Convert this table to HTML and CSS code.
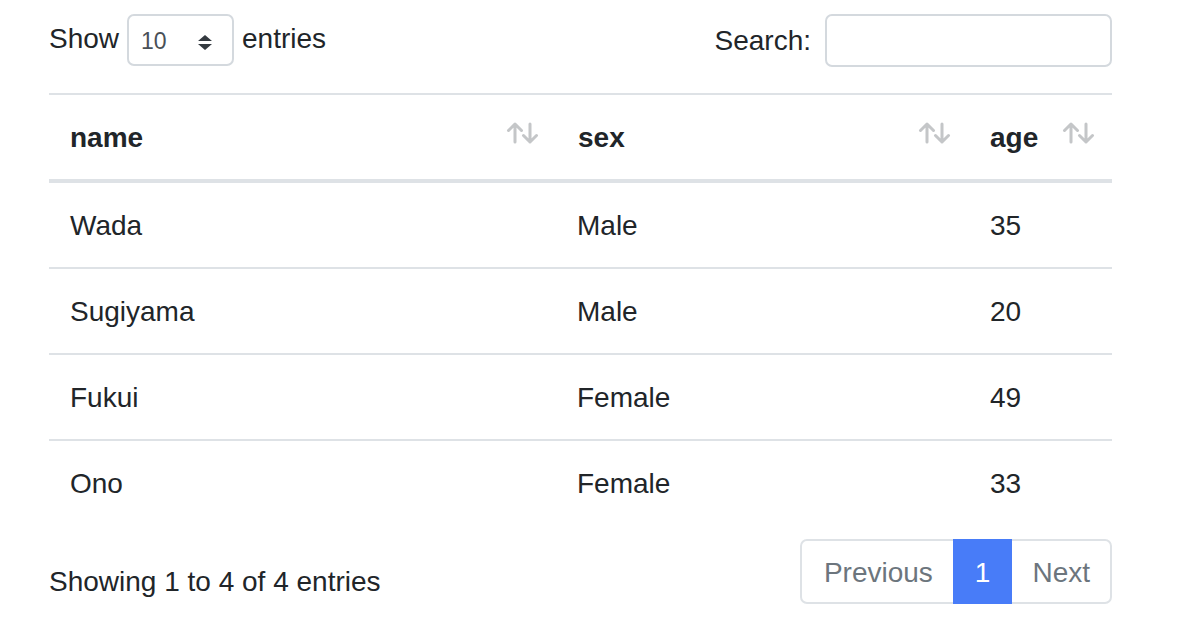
FILE: index.html
```html
<!DOCTYPE html>
<html lang="en">
<head>
<meta charset="utf-8">
<title>DataTable</title>
<link rel="stylesheet" href="styles.css">
</head>
<body>
<div class="wrap">
  <div class="top">
    <label class="len">
      <span>Show</span>
      <span class="sel-wrap">
        <select class="sel">
          <option>10</option>
          <option>25</option>
          <option>50</option>
          <option>100</option>
        </select>
        <svg class="sel-icon" width="14" height="15" viewBox="0 0 14 15"><path d="M7 0L0 6h14zM7 15L0 9h14z" fill="#343a40"/></svg>
      </span>
      <span class="len-after">entries</span>
    </label>
    <label class="search">
      <span>Search:</span>
      <input class="search-input" type="search">
    </label>
  </div>

  <table class="tbl">
    <thead>
      <tr>
        <th class="c-name"><div class="th-in"><span>name</span><svg class="sort" width="34" height="22" viewBox="0 0 34 22"><g fill="none" stroke="#c4c6c8" stroke-width="3" stroke-linecap="round" stroke-linejoin="round"><path d="M9 20V2M2.5 8.5L9 2l6.5 6.5"/><path d="M24 2v18M17.5 13.5L24 20l6.5-6.5"/></g></svg></div></th>
        <th class="c-sex"><div class="th-in"><span>sex</span><svg class="sort" width="34" height="22" viewBox="0 0 34 22"><g fill="none" stroke="#c4c6c8" stroke-width="3" stroke-linecap="round" stroke-linejoin="round"><path d="M9 20V2M2.5 8.5L9 2l6.5 6.5"/><path d="M24 2v18M17.5 13.5L24 20l6.5-6.5"/></g></svg></div></th>
        <th class="c-age"><div class="th-in"><span>age</span><svg class="sort" width="34" height="22" viewBox="0 0 34 22"><g fill="none" stroke="#c4c6c8" stroke-width="3" stroke-linecap="round" stroke-linejoin="round"><path d="M9 20V2M2.5 8.5L9 2l6.5 6.5"/><path d="M24 2v18M17.5 13.5L24 20l6.5-6.5"/></g></svg></div></th>
      </tr>
    </thead>
    <tbody>
      <tr><td>Wada</td><td>Male</td><td>35</td></tr>
      <tr><td>Sugiyama</td><td>Male</td><td>20</td></tr>
      <tr><td>Fukui</td><td>Female</td><td>49</td></tr>
      <tr><td>Ono</td><td>Female</td><td>33</td></tr>
    </tbody>
  </table>

  <div class="bottom">
    <div class="info">Showing 1 to 4 of 4 entries</div>
    <ul class="pager">
      <li class="pg pg-first"><span class="pg-link">Previous</span></li>
      <li class="pg pg-active"><span class="pg-link">1</span></li>
      <li class="pg pg-last"><span class="pg-link">Next</span></li>
    </ul>
  </div>
</div>
</body>
</html>
```

FILE: styles.css
```css
html, body {
  margin: 0;
  padding: 0;
  background: #ffffff;
}

body {
  font-family: "Liberation Sans", Arial, Helvetica, sans-serif;
  font-size: 28px;
  line-height: 42px;
  color: #212529;
}

.wrap {
  width: 1063px;
  margin-left: 49px;
  padding-top: 14px;
}

/* top controls */
.top {
  display: flex;
  justify-content: space-between;
  align-items: center;
  height: 52px;
}

.len {
  display: flex;
  align-items: center;
  white-space: nowrap;
}

.len > span:first-child {
  position: relative;
  top: -1px;
}

.sel-wrap {
  position: relative;
  display: inline-block;
  margin-left: 8px;
  height: 52px;
}

.sel {
  appearance: none;
  -webkit-appearance: none;
  width: 107px;
  height: 52px;
  box-sizing: border-box;
  border: 2px solid #d4d9de;
  border-radius: 7px;
  background: #ffffff;
  padding: 2px 0 0 12px;
  font-family: "Liberation Sans", Arial, Helvetica, sans-serif;
  font-size: 23px;
  color: #495057;
  outline: none;
}

.sel-icon {
  position: absolute;
  right: 22px;
  top: 21px;
  pointer-events: none;
}

.len-after {
  margin-left: 8px;
  position: relative;
  top: -1px;
}

.search {
  display: flex;
  align-items: center;
  white-space: nowrap;
}

.search > span {
  position: relative;
  top: 1px;
}

.search-input {
  width: 287px;
  height: 53px;
  box-sizing: border-box;
  margin-left: 14px;
  border: 2px solid #d4d9de;
  border-radius: 7px;
  background: #ffffff;
  outline: none;
  font-size: 22px;
}

/* table */
.tbl {
  width: 1063px;
  margin-top: 27px;
  border-collapse: separate;
  border-spacing: 0;
  table-layout: fixed;
}

.tbl th,
.tbl td {
  box-sizing: border-box;
}

.c-name { width: 508px; }
.c-sex { width: 412px; }
.c-age { width: 143px; }

.tbl th {
  text-align: left;
  font-weight: bold;
  padding: 22px 16px 20px 21px;
  border-top: 2px solid #dee2e6;
  border-bottom: 4px solid #dee2e6;
  vertical-align: bottom;
}

.tbl th.c-name,
.tbl th.c-sex { padding-right: 17px; }

.th-in {
  display: flex;
  justify-content: space-between;
  align-items: flex-start;
}

.sort {
  margin-top: 5px;
  flex: none;
}

.tbl td {
  padding: 22px 21px 20px 21px;
  border-top: 2px solid #dee2e6;
  vertical-align: top;
}

.tbl tbody tr > td:nth-child(2) {
  padding-left: 20px;
}

.tbl tbody tr:first-child td {
  border-top: 0;
}

/* bottom */
.bottom {
  display: flex;
  justify-content: space-between;
  align-items: flex-start;
  margin-top: 14px;
}

.info {
  padding-top: 22px;
  white-space: nowrap;
}

.pager {
  display: flex;
  list-style: none;
  margin: 0;
  padding: 0;
}

.pg-link {
  display: block;
  padding: 14px 20px 12px 20px;
  line-height: 35px;
  color: #6c757d;
  background: #ffffff;
  border: 2px solid #dee2e6;
}

.pg + .pg .pg-link {
  margin-left: -2px;
}

.pg-first .pg-link {
  border-radius: 7px 0 0 7px;
  padding-left: 22px;
}

.pg-last .pg-link {
  border-radius: 0 7px 7px 0;
}

.pg-active .pg-link {
  position: relative;
  background: #487cf8;
  border-color: #487cf8;
  color: #ffffff;
}
```
